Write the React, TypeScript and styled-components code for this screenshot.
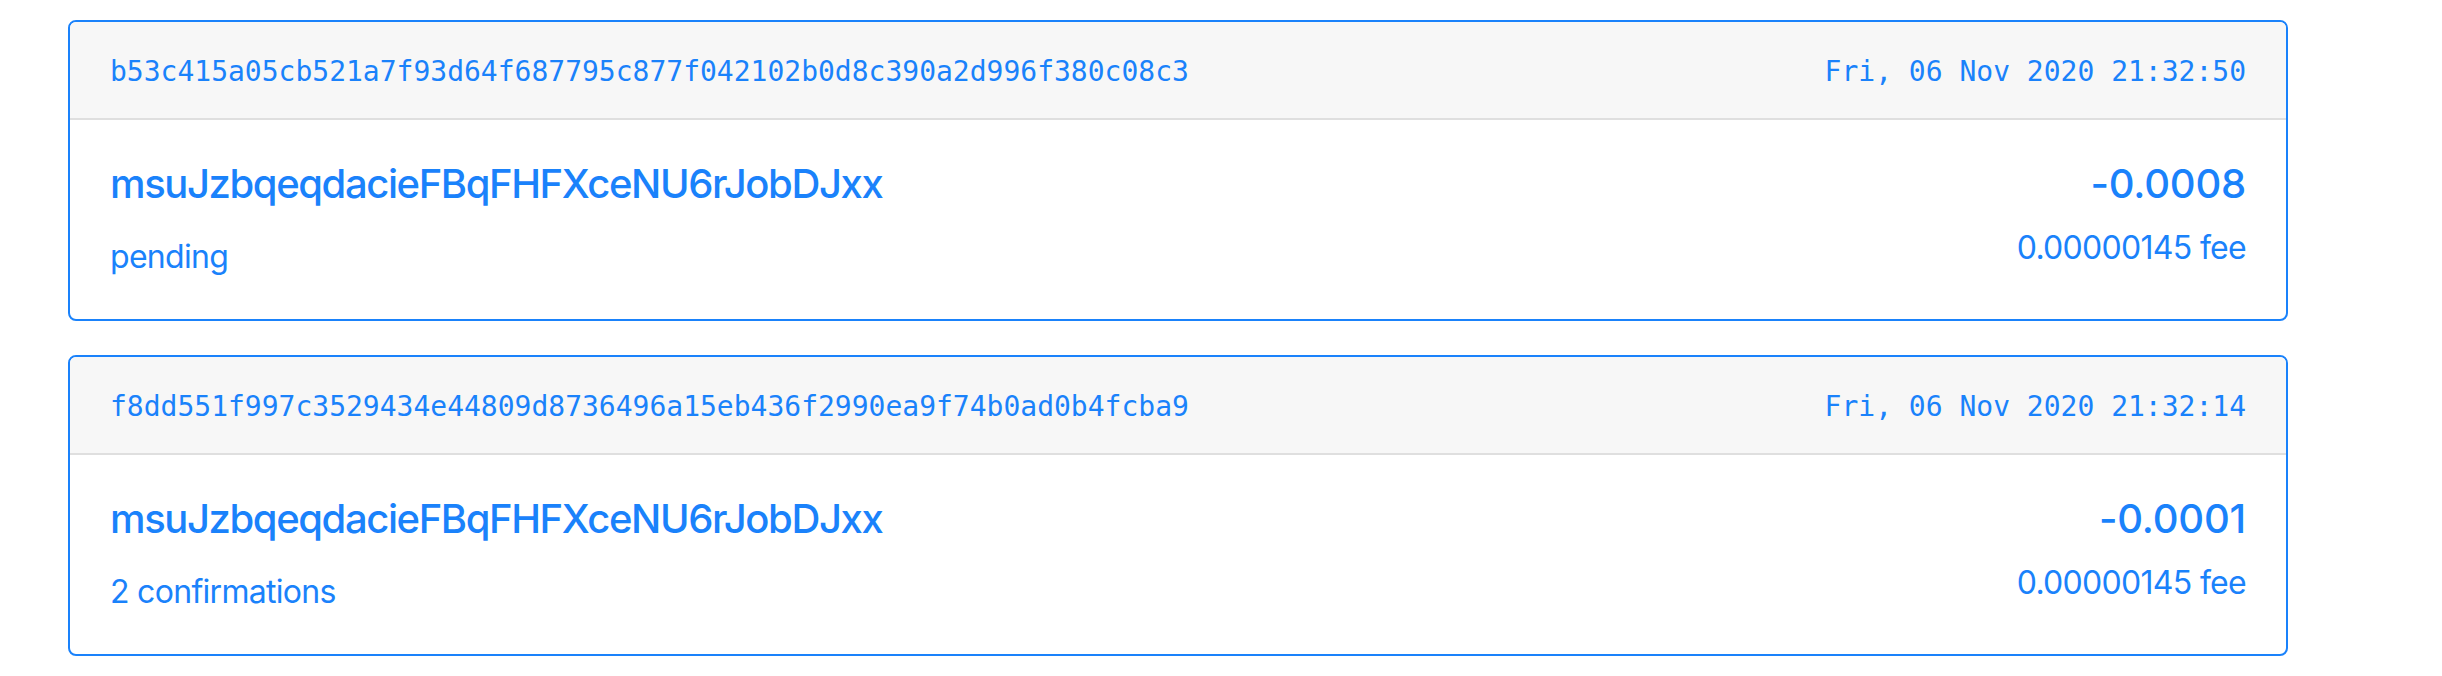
import React from "react";
import styled, { createGlobalStyle } from "styled-components";

const GlobalStyle = createGlobalStyle`
  html, body {
    margin: 0;
    padding: 0;
    background: #ffffff;
  }
  body {
    font-family: Inter, "Liberation Sans", Arial, sans-serif;
    color: #007bff;
  }
`;

const Page = styled.div`
  display: flex;
  flex-direction: column;
  gap: 34px;
  padding: 20px 0 0 68px;
  width: 2220px;
`;

const Card = styled.div`
  display: flex;
  flex-direction: column;
  border: 2px solid #1a82fb;
  border-radius: 8px;
  overflow: hidden;
  background: #ffffff;
`;

const Header = styled.div`
  display: flex;
  justify-content: space-between;
  align-items: center;
  padding: 26px 40px 22px;
  background: #f7f7f7;
  border-bottom: 2px solid #dfdfdf;
  font-family: "DejaVu Sans Mono", "Liberation Mono", monospace;
  font-size: 28px;
  line-height: 48px;
  color: #1a82fb;
`;

const Body = styled.div`
  display: flex;
  justify-content: space-between;
  align-items: flex-start;
  padding: 40px 40px 38px;
`;

const Column = styled.div<{ $align: "left" | "right"; $gap: number }>`
  display: flex;
  flex-direction: column;
  align-items: ${(p) => (p.$align === "right" ? "flex-end" : "flex-start")};
  gap: ${(p) => p.$gap}px;
`;

const Title = styled.div<{ $spacing: number }>`
  font-size: 40px;
  line-height: 48px;
  font-weight: 500;
  letter-spacing: ${(p) => p.$spacing}px;
  color: #1a82fb;
`;

const Sub = styled.div`
  font-size: 32px;
  line-height: 48px;
  font-weight: 400;
  letter-spacing: -0.7px;
  color: #1a82fb;
`;

type Tx = {
  hash: string;
  date: string;
  address: string;
  status: string;
  amount: string;
  fee: string;
};

const txs: Tx[] = [
  {
    hash: "b53c415a05cb521a7f93d64f687795c877f042102b0d8c390a2d996f380c08c3",
    date: "Fri, 06 Nov 2020 21:32:50",
    address: "msuJzbqeqdacieFBqFHFXceNU6rJobDJxx",
    status: "pending",
    amount: "-0.0008",
    fee: "0.00000145 fee",
  },
  {
    hash: "f8dd551f997c3529434e44809d8736496a15eb436f2990ea9f74b0ad0b4fcba9",
    date: "Fri, 06 Nov 2020 21:32:14",
    address: "msuJzbqeqdacieFBqFHFXceNU6rJobDJxx",
    status: "2 confirmations",
    amount: "-0.0001",
    fee: "0.00000145 fee",
  },
];

export default function App() {
  return (
    <>
      <GlobalStyle />
      <Page>
        {txs.map((tx) => (
          <Card key={tx.hash}>
            <Header>
              <span>{tx.hash}</span>
              <span>{tx.date}</span>
            </Header>
            <Body>
              <Column $align="left" $gap={25}>
                <Title $spacing={-1.4}>{tx.address}</Title>
                <Sub>{tx.status}</Sub>
              </Column>
              <Column $align="right" $gap={16}>
                <Title $spacing={-0.2}>{tx.amount}</Title>
                <Sub>{tx.fee}</Sub>
              </Column>
            </Body>
          </Card>
        ))}
      </Page>
    </>
  );
}
